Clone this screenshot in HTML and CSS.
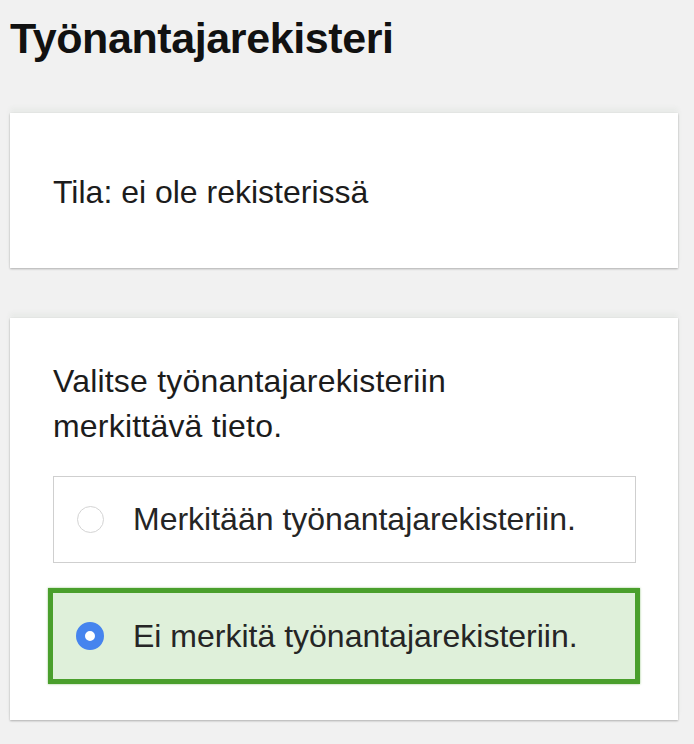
FILE: index.html
```html
<!DOCTYPE html>
<html lang="fi">
<head>
<meta charset="utf-8">
<link rel="stylesheet" href="styles.css">
</head>
<body>
<h1 class="title">Työnantajarekisteri</h1>
<section class="card status">
  <p class="status-text">Tila: ei ole rekisterissä</p>
</section>
<section class="card choose">
  <p class="prompt">Valitse työnantajarekisteriin merkittävä tieto.</p>
  <div class="options">
    <label class="option">
      <span class="radio"></span>
      <span class="option-text">Merkitään työnantajarekisteriin.</span>
    </label>
    <label class="option selected">
      <span class="radio checked"></span>
      <span class="option-text">Ei merkitä työnantajarekisteriin.</span>
    </label>
  </div>
</section>
</body>
</html>
```
FILE: styles.css
```css
html, body {
  margin: 0;
  padding: 0;
}
body {
  background: #f1f1f1;
  font-family: "Liberation Sans", Arial, sans-serif;
  color: #1c1c1c;
  width: 694px;
  height: 744px;
  overflow: hidden;
}
.title {
  margin: 0;
  padding: 14px 0 0 10px;
  font-size: 43px;
  line-height: 48px;
  font-weight: bold;
  color: #111;
  letter-spacing: -0.4px;
}
.card {
  background: #fff;
  margin: 0 16px 0 10px;
  box-shadow: 0 1px 2px rgba(0,0,0,0.28), 0 -5px 5px rgba(80,110,80,0.05);
}
.status {
  margin-top: 51px;
  height: 155px;
  display: flex;
  align-items: center;
  padding: 3px 43px 0;
  box-sizing: border-box;
}
.status-text {
  margin: 0;
  font-size: 32px;
  line-height: 38px;
}
.choose {
  margin-top: 50px;
  padding: 41px 42px 36px 43px;
}
.prompt {
  margin: 0;
  font-size: 32px;
  line-height: 45px;
  width: 480px;
  letter-spacing: 0.2px;
}
.options {
  margin-top: 27px;
  display: flex;
  flex-direction: column;
  gap: 25px;
}
.option {
  display: flex;
  align-items: center;
  border: 1px solid #cfcfcf;
  height: 87px;
  box-sizing: border-box;
  padding-left: 23px;
  background: #fff;
}
.option.selected {
  border: 5px solid #4a9f2c;
  background: #dff0da;
  height: 96px;
  margin: 0 -4px 0 -5px;
  padding-left: 23px;
  box-shadow: 0 0 2px rgba(74,159,44,0.6);
}
.radio {
  width: 27px;
  height: 27px;
  border-radius: 50%;
  border: 1px solid #d4d4d4;
  box-sizing: border-box;
  background: #fff;
  flex: none;
}
.radio.checked {
  width: 28px;
  height: 28px;
  border: 9px solid #4684ee;
  background: #fff;
}
.option-text {
  margin-left: 29px;
  font-size: 32px;
  color: #252525;
}
```
